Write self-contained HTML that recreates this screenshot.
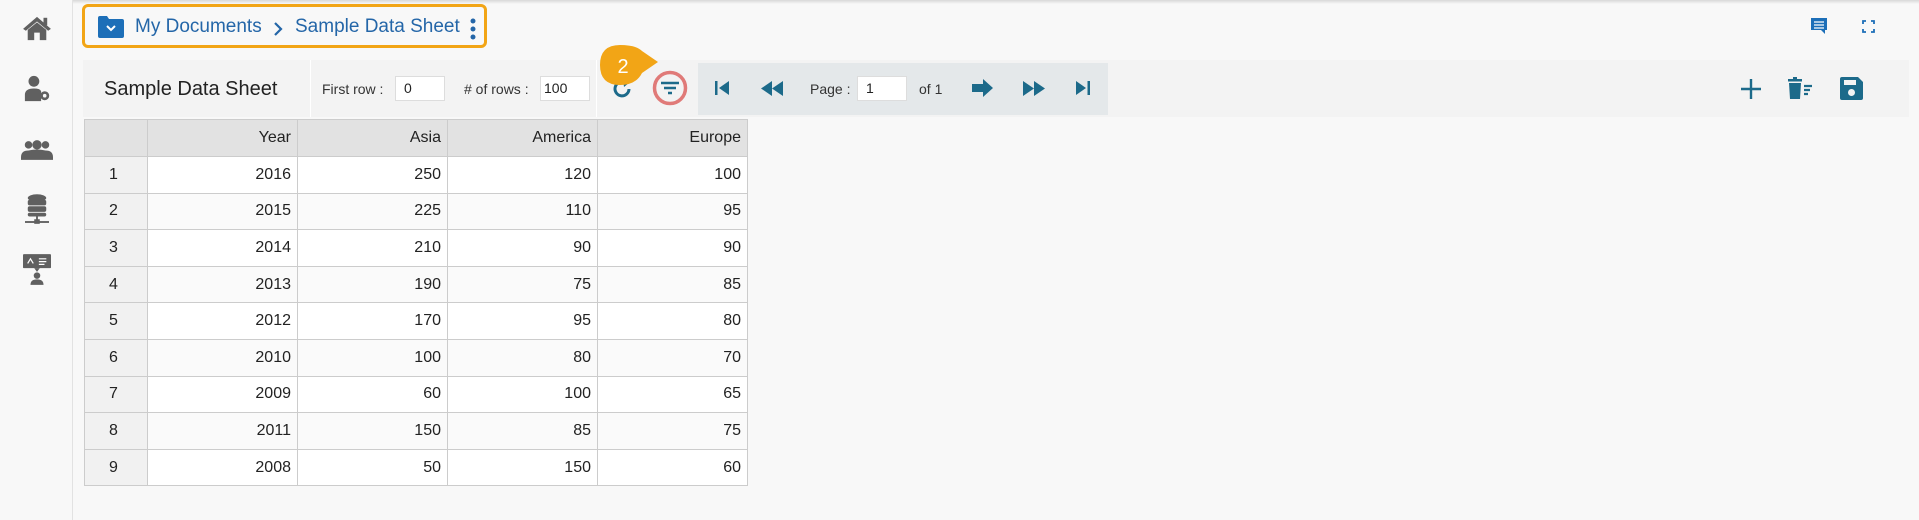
<!DOCTYPE html>
<html><head><meta charset="utf-8"><style>
*{box-sizing:border-box;margin:0;padding:0}
body{width:1919px;height:520px;background:#f8f8f8;font-family:"Liberation Sans",sans-serif;position:relative;overflow:hidden}
.topsh{position:absolute;left:0;top:0;width:1919px;height:4px;background:linear-gradient(#d8d8d8,#f8f8f8)}
.side{position:absolute;left:0;top:0;width:73px;height:520px;background:#f8f8f8;border-right:1px solid #e2e2e2}
.ab{position:absolute}
.bc{position:absolute;left:82px;top:4px;width:405px;height:44px;border:3px solid #f2a516;border-radius:6px}
.bc span{position:absolute;top:9px;font-size:19px;color:#2466a8}
.tb{position:absolute;left:83px;top:60px;width:1826px;height:57px;background:#f3f3f3}
.pg{position:absolute;left:698px;top:63px;width:410px;height:52px;background:#e4e8ea}
.lbl{position:absolute;font-size:14px;color:#333}
.inp{position:absolute;background:#fff;border:1px solid #ddd;height:25px;font-size:14px;padding:3px 8px;color:#222}
table{position:absolute;left:84px;top:119px;border-collapse:collapse;font-size:16px;color:#222}
td{border:1px solid #ccc;height:36.6px;text-align:right;padding:0 6px;background:#fff}
tr:nth-child(odd) td{background:#fafafa}
td:first-child{width:63px;text-align:left;padding-left:24px;background:#f1f1f1!important}
td:not(:first-child){width:150px}
tr.h td{background:#e2e2e2!important;height:37px}
</style></head><body>
<div class="topsh"></div>
<div class="side">
<svg class="ab" style="left:22px;top:15px" width="30" height="26" viewBox="0 0 32 28"><path d="M16 2 L1 15 L4 17 L16 7 L28 17 L31 15 Z" fill="#606060"/><path d="M6 16 L16 8 L26 16 V27 H19 V19 H13 V27 H6Z" fill="#606060"/><rect x="23" y="3" width="4" height="8" fill="#606060"/></svg>
<svg class="ab" style="left:24px;top:75px" width="27" height="27" viewBox="0 0 30 30"><circle cx="11" cy="7" r="6" fill="#606060"/><path d="M1 29 V22 Q1 15 11 15 Q18 15 19 18 L19 29Z" fill="#606060"/><circle cx="23" cy="23" r="5" fill="#606060"/><circle cx="23" cy="23" r="2" fill="#f8f8f8"/></svg>
<svg class="ab" style="left:21px;top:140px" width="32" height="21" viewBox="0 0 34 22"><circle cx="8" cy="5" r="4" fill="#606060"/><circle cx="26" cy="5" r="4" fill="#606060"/><circle cx="17" cy="5" r="5" fill="#606060"/><path d="M0 18 Q0 11 8 11 Q17 9 26 11 Q34 11 34 18 V21 H0Z" fill="#606060"/></svg>
<svg class="ab" style="left:25px;top:194px" width="24" height="32" viewBox="0 0 26 34"><ellipse cx="13" cy="4" rx="10" ry="4" fill="#606060"/><rect x="3" y="6" width="20" height="6" rx="2" fill="#606060"/><rect x="3" y="13" width="20" height="6" rx="2" fill="#606060"/><rect x="3" y="20" width="20" height="4" rx="2" fill="#606060"/><rect x="12" y="24" width="2" height="6" fill="#606060"/><rect x="0" y="29" width="26" height="2" fill="#606060"/><rect x="10" y="27" width="6" height="5" fill="#606060"/></svg>
<svg class="ab" style="left:23px;top:254px" width="28" height="32" viewBox="0 0 30 34"><rect x="0" y="0" width="30" height="15" rx="1" fill="#606060"/><path d="M12 15 L15 19 L18 15Z" fill="#606060"/><path d="M5 10 L8 5 L11 10 M17 5 H25 M17 8 H25 M17 11 H23" stroke="#fff" stroke-width="1.3" fill="none"/><circle cx="15" cy="23" r="3.5" fill="#606060"/><path d="M8 33 Q8 27 15 27 Q22 27 22 33Z" fill="#606060"/></svg>
</div>
<div class="bc">
<svg class="ab" style="left:13px;top:9px" width="26" height="22" viewBox="0 0 26 22"><path d="M0 2 Q0 0 2 0 H9 L11 3 H24 Q26 3 26 5 V20 Q26 22 24 22 H2 Q0 22 0 20Z" fill="#1d6fb8"/><path d="M9 10 L13 14 L17 10" stroke="#fff" stroke-width="2" fill="none"/></svg>
<span style="left:50px">My Documents</span>
<svg class="ab" style="left:188px;top:15px" width="10" height="14" viewBox="0 0 10 14"><path d="M2 1 L8 7 L2 13" stroke="#2466a8" stroke-width="2.2" fill="none"/></svg>
<span style="left:210px">Sample Data Sheet</span>
<svg class="ab" style="left:385px;top:11px" width="6" height="22" viewBox="0 0 6 22"><circle cx="3" cy="3" r="2.5" fill="#2466a8"/><circle cx="3" cy="11" r="2.5" fill="#2466a8"/><circle cx="3" cy="19" r="2.5" fill="#2466a8"/></svg>
</div>
<svg class="ab" style="left:1810px;top:17px" width="18" height="18" viewBox="0 0 18 18"><path d="M1 1 H17 V13 H15 V17 L11 13 H1Z" fill="#1d6fb8"/><path d="M4 5 H14 M4 8 H14 M4 11 H14" stroke="#fff" stroke-width="1.3"/></svg>
<svg class="ab" style="left:1862px;top:20px" width="13" height="13" viewBox="0 0 13 13"><path d="M1 4 V1 H4 M9 1 H12 V4 M12 9 V12 H9 M4 12 H1 V9" stroke="#1d6fb8" stroke-width="1.8" fill="none"/></svg>
<div class="tb">
<div class="ab" style="left:227px;top:0;width:1px;height:57px;background:#fff"></div>
<div class="ab" style="left:513px;top:0;width:1px;height:57px;background:#fff"></div>
</div>
<div class="pg"></div>
<div class="ab" style="left:104px;top:78px;font-size:20px;color:#222">Sample Data Sheet</div>
<div class="lbl" style="left:322px;top:81px">First row :</div>
<div class="inp" style="left:395px;top:76px;width:50px">0</div>
<div class="lbl" style="left:464px;top:81px"># of rows :</div>
<div class="inp" style="left:540px;top:76px;width:50px;padding-left:3px">100</div>
<svg class="ab" style="left:611px;top:78px" width="22" height="22" viewBox="0 0 22 22"><path d="M18 11 A7 7 0 1 1 14 4.5" stroke="#1c6a8a" stroke-width="3" fill="none"/><path d="M12 1 L19 4 L13 9Z" fill="#1c6a8a"/></svg>
<svg class="ab" style="left:652px;top:70px" width="36" height="36" viewBox="0 0 36 36"><circle cx="18" cy="18" r="15.5" stroke="#e07a78" stroke-width="3.5" fill="none"/><path d="M9 13 H27 M12 18 H24 M16 23 H20" stroke="#1c6a8a" stroke-width="2.4"/></svg>
<svg class="ab" style="left:598px;top:45px" width="62" height="44" viewBox="0 0 62 44"><path d="M22 0 Q38 0 44 6 L60 17 L44 28 Q38 40 22 40 Q2 40 2 20 Q2 0 22 0Z" fill="#f2a516"/><text x="25" y="28" font-family="Liberation Sans" font-size="20" fill="#fff" text-anchor="middle">2</text></svg>
<svg class="ab" style="left:714px;top:80px" width="16" height="16" viewBox="0 0 16 16"><rect x="1" y="1" width="2.5" height="14" fill="#1c6a8a"/><path d="M15 1 V15 L5 8Z" fill="#1c6a8a"/></svg>
<svg class="ab" style="left:760px;top:81px" width="24" height="15" viewBox="0 0 24 15"><path d="M12 0 V15 L1 7.5Z M23 0 V15 L12 7.5Z" fill="#1c6a8a"/></svg>
<div class="lbl" style="left:810px;top:81px">Page :</div>
<div class="inp" style="left:857px;top:76px;width:50px">1</div>
<div class="lbl" style="left:919px;top:81px">of 1</div>
<svg class="ab" style="left:972px;top:79px" width="22" height="18" viewBox="0 0 22 18"><path d="M0 5 H11 V0 L21 9 L11 18 V13 H0Z" fill="#1c6a8a"/></svg>
<svg class="ab" style="left:1022px;top:81px" width="24" height="15" viewBox="0 0 24 15"><path d="M1 0 V15 L12 7.5Z M12 0 V15 L23 7.5Z" fill="#1c6a8a"/></svg>
<svg class="ab" style="left:1075px;top:80px" width="16" height="16" viewBox="0 0 16 16"><path d="M1 1 V15 L11 8Z" fill="#1c6a8a"/><rect x="12.5" y="1" width="2.5" height="14" fill="#1c6a8a"/></svg>
<svg class="ab" style="left:1741px;top:79px" width="20" height="20" viewBox="0 0 20 20"><path d="M10 0 V20 M0 10 H20" stroke="#1c6a8a" stroke-width="2.4"/></svg>
<svg class="ab" style="left:1788px;top:77px" width="26" height="22" viewBox="0 0 26 22"><rect x="0" y="2" width="14" height="2.5" fill="#1c6a8a"/><rect x="5" y="0" width="4" height="3" fill="#1c6a8a"/><path d="M1 6 H13 L12 22 H2Z" fill="#1c6a8a"/><path d="M16 9 H24 M16 13 H22 M16 17 H20" stroke="#1c6a8a" stroke-width="2.2"/></svg>
<svg class="ab" style="left:1840px;top:77px" width="23" height="23" viewBox="0 0 23 23"><path d="M0 2 Q0 0 2 0 H18 L23 5 V21 Q23 23 21 23 H2 Q0 23 0 21Z" fill="#1c6a8a"/><rect x="4" y="3" width="12" height="5" fill="#f3f3f3"/><circle cx="11.5" cy="15.5" r="3.5" fill="#f3f3f3"/></svg>
<table>
<tr class="h"><td></td><td>Year</td><td>Asia</td><td>America</td><td>Europe</td></tr>
<tr><td>1</td><td>2016</td><td>250</td><td>120</td><td>100</td></tr>
<tr><td>2</td><td>2015</td><td>225</td><td>110</td><td>95</td></tr>
<tr><td>3</td><td>2014</td><td>210</td><td>90</td><td>90</td></tr>
<tr><td>4</td><td>2013</td><td>190</td><td>75</td><td>85</td></tr>
<tr><td>5</td><td>2012</td><td>170</td><td>95</td><td>80</td></tr>
<tr><td>6</td><td>2010</td><td>100</td><td>80</td><td>70</td></tr>
<tr><td>7</td><td>2009</td><td>60</td><td>100</td><td>65</td></tr>
<tr><td>8</td><td>2011</td><td>150</td><td>85</td><td>75</td></tr>
<tr><td>9</td><td>2008</td><td>50</td><td>150</td><td>60</td></tr>
</table>
</body></html>
